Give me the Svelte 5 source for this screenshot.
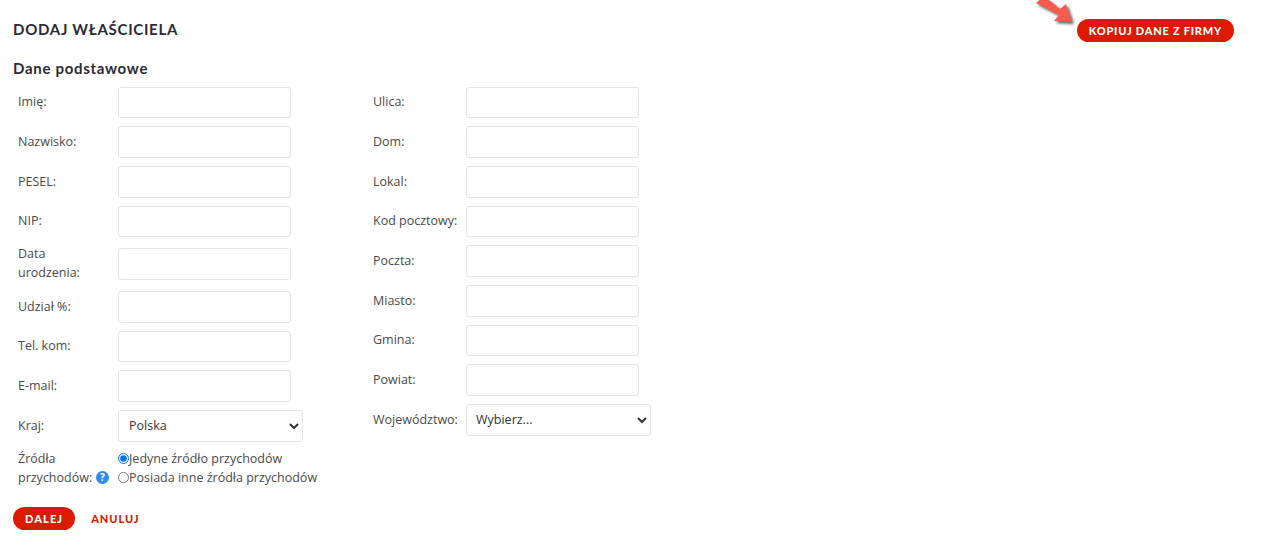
<script>
  const left = ['Imię:', 'Nazwisko:', 'PESEL:', 'NIP:', 'Data urodzenia:', 'Udział %:', 'Tel. kom:', 'E-mail:'];
  const right = ['Ulica:', 'Dom:', 'Lokal:', 'Kod pocztowy:', 'Poczta:', 'Miasto:', 'Gmina:', 'Powiat:'];
</script>

<div class="page">
  <header class="top">
    <h1>DODAJ WŁAŚCICIELA</h1>
    <div class="copy">
      <svg class="arrow" width="44" height="30" viewBox="0 0 44 30" aria-hidden="true">
        <path class="tip" d="M3 3 L11 -4 L27 9 L33 4 L39 22 L21 21 L26 15 Z" />
      </svg>
      <button class="btn">KOPIUJ DANE Z FIRMY</button>
    </div>
  </header>

  <h2>Dane podstawowe</h2>

  <div class="columns">
    <div class="col col-left">
      {#each left as label}
        <div class="row" class:tall={label.startsWith('Data')}>
          <span class="label">{label}</span>
          <input type="text" />
        </div>
      {/each}
      <div class="row">
        <span class="label">Kraj:</span>
        <select>
          <option>Polska</option>
        </select>
      </div>
      <div class="row sources">
        <span class="label">Źródła przychodów:
          <svg class="help" width="13" height="13" viewBox="0 0 13 13" aria-hidden="true">
            <circle cx="6.5" cy="6.5" r="6.5" fill="#2d8ceb" />
            <text x="6.5" y="10.2" text-anchor="middle">?</text>
          </svg>
        </span>
        <div class="radios">
          <label><input type="radio" name="src" checked />Jedyne źródło przychodów</label>
          <label><input type="radio" name="src" />Posiada inne źródła przychodów</label>
        </div>
      </div>
    </div>

    <div class="col col-right">
      {#each right as label}
        <div class="row">
          <span class="label">{label}</span>
          <input type="text" />
        </div>
      {/each}
      <div class="row">
        <span class="label">Województwo:</span>
        <select>
          <option>Wybierz...</option>
        </select>
      </div>
    </div>
  </div>

  <div class="actions">
    <button class="btn">DALEJ</button>
    <a href="#top" class="cancel">ANULUJ</a>
  </div>
</div>

<style>
  :global(body) {
    margin: 0;
    background: #fff;
    font-family: "Open Sans", sans-serif;
    font-size: 12.5px;
    color: #4a4a4a;
  }

  .page {
    padding: 16px 32px 0 13px;
  }

  .top {
    display: flex;
    justify-content: space-between;
    align-items: center;
    height: 26px;
  }

  h1,
  h2 {
    margin: 0;
    font-family: Lato, sans-serif;
    color: #2b2b36;
  }

  h1 {
    font-size: 15px;
    font-weight: 700;
    letter-spacing: 0.72px;
  }

  h2 {
    margin-top: 17px;
    height: 23.67px;
    line-height: 19px;
    font-size: 15px;
    font-weight: 700;
    letter-spacing: 0.7px;
  }

  .copy {
    position: relative;
    padding-top: 3px;
  }

  .arrow {
    position: absolute;
    left: -44px;
    top: -16px;
    filter: drop-shadow(2px 2px 1.5px rgba(0, 0, 0, 0.65));
  }

  .tip {
    fill: #fb5a50;
  }

  .btn {
    height: 23px;
    padding: 0 12px;
    border: 0;
    border-radius: 12px;
    background: #dd1900;
    color: #fff;
    font-family: Lato, sans-serif;
    font-size: 11px;
    font-weight: 900;
    letter-spacing: 0.77px;
  }

  .columns {
    display: flex;
  }

  .col-left {
    width: 355px;
    padding-left: 5px;
  }

  .row {
    display: flex;
    align-items: center;
    padding: 4px 0;
    min-height: 31.67px;
  }

  .tall {
    box-sizing: border-box;
    height: 45.67px;
    padding: 0;
  }

  .label {
    flex: none;
    box-sizing: border-box;
    width: 100px;
    line-height: 19px;
    padding-bottom: 1px;
  }

  .tall .label {
    padding-right: 30px;
    padding-bottom: 2px;
  }

  .col-right .label {
    width: 93px;
    white-space: nowrap;
  }

  .row input[type="text"] {
    width: 173px;
    height: 31.67px;
    box-sizing: border-box;
    border: 1px solid #e4e4e4;
    border-radius: 3px;
    background: #fff;
  }

  select {
    width: 185px;
    height: 32px;
    padding: 0 6px;
    border: 1px solid #e4e4e4;
    border-radius: 3px;
    background: #fff;
    font-family: "Open Sans", sans-serif;
    font-size: 12.5px;
    color: #333;
  }

  .col-right select {
    padding-left: 5px;
  }

  .sources {
    align-items: flex-start;
    padding-bottom: 0;
    margin-top: -1px;
  }

  .help {
    vertical-align: -2px;
    margin-left: 1px;
    margin-right: -6px;
  }

  .help text {
    fill: #fff;
    font-family: "Open Sans", sans-serif;
    font-size: 10px;
    font-weight: 700;
  }

  .radios {
    display: flex;
    flex-direction: column;
  }

  .radios label {
    display: flex;
    align-items: center;
    height: 19px;
    white-space: nowrap;
  }

  .radios input {
    width: 11px;
    height: 11px;
    margin: 0;
  }

  .actions {
    display: flex;
    align-items: center;
    gap: 16px;
    margin-top: 19px;
  }

  .cancel {
    color: #d81b00;
    font-family: Lato, sans-serif;
    font-size: 11px;
    font-weight: 900;
    letter-spacing: 0.95px;
    text-decoration: none;
  }

  .actions .btn {
    letter-spacing: 1.1px;
  }
</style>
